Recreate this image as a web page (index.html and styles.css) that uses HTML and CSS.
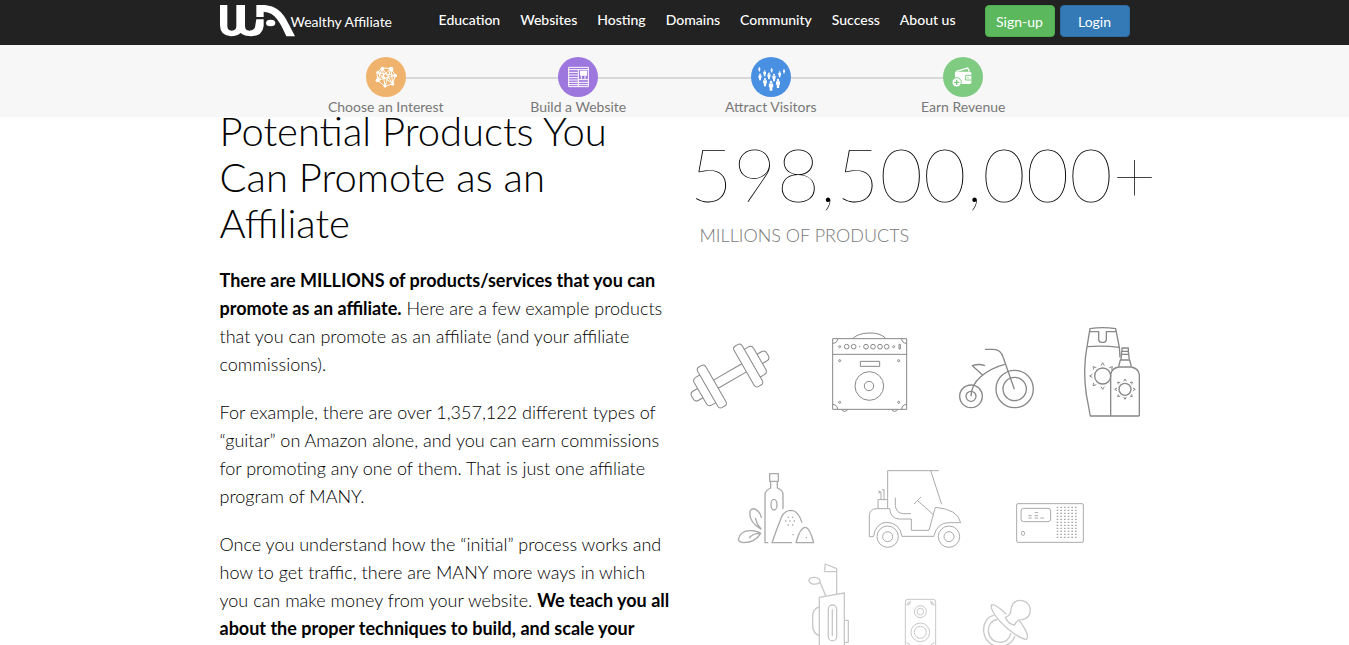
FILE: index.html
```html
<!doctype html>
<html lang="en">
<head>
	<meta charset="utf-8">
	<title>Wealthy Affiliate</title>
	<link rel="stylesheet" href="styles.css">
</head>
<body>
	<header class="site-header">
		<div class="topbar">
			<div class="container topbar-inner">
				<a class="brand" href="#">
					<svg class="logo" width="75" height="33" viewBox="30 15 225 99" aria-hidden="true">
						<path d="M30 15H52V78Q52 92 65 92Q79 92 79 78V15H105V78Q105 92 118 92Q131 92 135 82L139 58H161V78Q158 108 124 109Q104 109 92 99Q80 109 62 109Q30 106 30 76Z" fill="#fff"/>
						<path d="M139 15H157C202 15 222 42 238 76L255 109H229C210 66 195 37 161 35V51H139Z" fill="#fff"/>
						<ellipse cx="182" cy="69" rx="14" ry="10" fill="#fff"/>
					</svg>
					<span>Wealthy Affiliate</span>
				</a>
				<nav class="nav">
					<a href="#">Education</a>
					<a href="#">Websites</a>
					<a href="#">Hosting</a>
					<a href="#">Domains</a>
					<a href="#">Community</a>
					<a href="#">Success</a>
					<a href="#">About us</a>
				</nav>
				<div class="actions">
					<button type="button" class="btn btn-green">Sign-up</button>
					<button type="button" class="btn btn-blue">Login</button>
				</div>
			</div>
		</div>
		<div class="process">
			<ol class="steps">
				<li class="step">
					<svg class="step-icon orange" width="40" height="40" viewBox="0 0 120 120" aria-hidden="true">
						<g fill="none" stroke="#fff" stroke-width="3">
							<path d="M49 33L75 35L88 55L80 80L57 88L35 70L33 47ZM49 33L57 88M75 35L35 70M88 55L33 47M80 80L49 33M33 47L80 80M75 35L57 88M88 55L35 70M49 33L35 70M75 35L80 80"/>
						</g>
						<g fill="#fff">
							<circle cx="49" cy="34" r="5"/><circle cx="75" cy="36" r="7"/><circle cx="88" cy="56" r="5"/><circle cx="80" cy="81" r="5"/>
							<circle cx="57" cy="88" r="4"/><circle cx="35" cy="70" r="6"/><circle cx="36" cy="46" r="5"/><circle cx="53" cy="61" r="4"/>
						</g>
					</svg>
					<a href="#">Choose an Interest</a>
				</li>
				<li class="step">
					<svg class="step-icon purple" width="40" height="40" viewBox="0 0 120 120" aria-hidden="true">
						<path d="M32 31H91V89H32ZM32 38H91M61 38V89M32 46H61M32 54H61M32 62H61M32 69H61M32 76H61M32 83H61M61 68H91M61 76H91M61 83H91M70 56V67M81 56V67" fill="none" stroke="#fff" stroke-width="3"/>
						<path d="M66 41H87V56H66Z" fill="#fff"/>
					</svg>
					<a href="#">Build a Website</a>
				</li>
				<li class="step">
					<svg class="step-icon blue" width="40" height="40" viewBox="0 0 120 120" aria-hidden="true">
						<defs>
							<g id="person">
								<circle cx="0" cy="-9" r="3"/>
								<path d="M-5 -6H5V3H3V11H-3V3H-5Z"/>
							</g>
						</defs>
						<g fill="#fff">
							<use href="#person" transform="translate(25 37) scale(.6)"/>
							<use href="#person" transform="translate(41 49) scale(.8)"/>
							<use href="#person" transform="translate(62 40) scale(.6)"/>
							<use href="#person" transform="translate(99 43) scale(.6)"/>
							<use href="#person" transform="translate(86 52) scale(.8)"/>
							<use href="#person" transform="translate(27 60) scale(.9)"/>
							<use href="#person" transform="translate(54 57) scale(.9)"/>
							<use href="#person" transform="translate(69 62)"/>
							<use href="#person" transform="translate(42 76) scale(1.1)"/>
							<use href="#person" transform="translate(81 80) scale(1.2)"/>
							<use href="#person" transform="translate(60 87) scale(1.3)"/>
						</g>
					</svg>
					<a href="#">Attract Visitors</a>
				</li>
				<li class="step">
					<svg class="step-icon green" width="40" height="40" viewBox="0 0 120 120" aria-hidden="true">
						<path d="M40 43L74 33L79 43" fill="none" stroke="#fff" stroke-width="4"/>
						<path d="M36 44H80Q85 44 85 49V76Q85 81 80 81H40Q36 81 36 76Z" fill="#fff"/>
						<path d="M85 55H68V69H85M75 60V64" fill="none" stroke="#7fcb82" stroke-width="3"/>
						<circle cx="41" cy="76" r="14" fill="#fff" stroke="#7fcb82" stroke-width="3"/>
						<path d="M41 68V84M33 76H49" stroke="#7fcb82" stroke-width="4"/>
					</svg>
					<a href="#">Earn Revenue</a>
				</li>
			</ol>
		</div>
	</header>

	<main class="container content">
		<section class="text">
			<h2>Potential Products You Can Promote as an Affiliate</h2>
			<p><strong>There are MILLIONS of products/services that you can promote as an affiliate.</strong> Here are a few example products that you can promote as an affiliate (and your affiliate commissions).</p>
			<p>For example, there are over 1,357,122 different types of “guitar” on Amazon alone, and you can earn commissions for promoting any one of them. That is just one affiliate program of MANY.</p>
			<p>Once you understand how the “initial” process works and how to get traffic, there are MANY more ways in which you can make money from your website. <strong>We teach you all about the proper techniques to build, and scale your</strong></p>
		</section>

		<section class="products">
			<div class="count">598,500,000+</div>
			<div class="count-label">MILLIONS OF PRODUCTS</div>

			<div class="icon-row dark">
				<!-- dumbbell -->
				<svg width="110" height="100" viewBox="30 0 330 300">
					<g transform="translate(150 168) rotate(-30)">
						<path d="M-49 -14H49M-49 14H49"/>
						<rect x="-77" y="-70" width="28" height="140" rx="10"/>
						<rect x="49" y="-70" width="28" height="140" rx="10"/>
						<path d="M-77 -48H-90Q-103 -48 -103 -36V36Q-103 48 -90 48H-77M77 -48H90Q103 -48 103 -36V36Q103 48 90 48H77"/>
						<path d="M-103 -16H-118Q-130 -16 -130 -5V5Q-130 16 -118 16H-103M103 -16H118Q130 -16 130 -5V5Q130 16 118 16H103"/>
					</g>
				</svg>
				<!-- guitar amp -->
				<svg width="130" height="100" viewBox="360 0 390 300">
					<path d="M458 56H680V268H458ZM458 103H680M519 55Q534 40 567 39Q602 38 617 55M541 124H599V139H541Z"/>
					<path d="M458 70Q472 70 473 56M665 56Q666 70 680 70M458 253Q472 254 473 268M665 268Q666 254 680 253M485 268Q487 274 494 274Q501 274 503 268M635 268Q637 274 644 274Q651 274 653 268"/>
					<circle cx="568" cy="198" r="43"/><circle cx="567" cy="198" r="14"/>
					<circle cx="500" cy="80" r="7"/><circle cx="521" cy="80" r="7"/><circle cx="558" cy="80" r="7"/><circle cx="579" cy="80" r="7"/><circle cx="600" cy="80" r="7"/><circle cx="620" cy="80" r="7"/>
					<circle cx="479" cy="80" r="3"/><circle cx="539" cy="80" r="1"/><circle cx="641" cy="80" r="3"/><path d="M657 73H661V87H657Z"/>
					<circle cx="479" cy="122" r="3"/><circle cx="656" cy="122" r="3"/><circle cx="479" cy="247" r="3"/><circle cx="656" cy="247" r="3"/>
				</svg>
				<!-- tricycle -->
				<svg class="bold" width="130" height="100" viewBox="-30 0 390 300">
					<circle cx="93" cy="229" r="34"/><circle cx="93" cy="229" r="15"/>
					<circle cx="224" cy="207" r="56"/><circle cx="224" cy="207" r="35"/>
					<path d="M135 88H160Q183 88 190 113L223 208M194 133Q150 145 122 170Q94 194 93 229M127 164L97 137Q116 130 135 137"/>
				</svg>
				<!-- sun lotion -->
				<svg width="90" height="100" viewBox="360 0 270 300">
					<g class="bold">
						<path d="M441 80L450 26Q488 20 527 26L538 82M441 80Q490 76 538 82L540 112M441 80Q428 150 439 224L451 288H598M447 35H476V58Q476 67 485 67H491Q499 67 499 58V35H528"/>
						<path d="M512 288V164Q514 145 536 141H573Q596 145 598 164V288M536 139L541 120H569L574 139M543 119L545 94H565L568 119M546 94V84H565V94M545 103H566"/>
						<circle cx="488" cy="168" r="24"/><circle cx="555" cy="208" r="18"/>
					</g>
					<path d="M483 137L488 128L493 137M483 200L488 208L493 200M457 163L449 168L457 173M461 149L459 140L469 143M461 188L459 197L469 194M508 143L517 140L515 149"/>
					<path d="M551 184L555 177L559 184M551 231L555 238L559 231M531 204L524 208L531 212M579 204L586 208L579 212M535 193L533 186L541 188M570 188L577 186L575 193M535 223L533 230L541 228M570 228L577 230L575 223"/>
				</svg>
			</div>

			<div class="icon-row mid">
				<!-- olive oil -->
				<svg class="bold" width="120" height="95" viewBox="0 0 360 285">
					<path d="M119 41H145V64H119ZM122 64V84Q105 91 105 105V248H115M142 64V84Q160 91 159 106V147"/>
					<ellipse cx="132" cy="134" rx="9" ry="16"/>
					<path d="M186 248H126Q141 204 155 170Q164 151 184 151Q205 152 216 188M198 248H251Q239 202 226 202Q211 201 198 248Z"/>
					<path d="M94 208Q55 185 60 154Q65 143 77 148Q93 159 94 174M76 174L82 192L94 208M92 220Q76 247 41 248Q25 246 25 238Q30 214 58 212Q79 211 92 220ZM92 220Q70 219 57 234"/>
					<path stroke-dasharray="4 9" d="M173 172H197M165 183H203M173 195H195M187 224H198M227 233H235"/>
				</svg>
				<!-- golf cart -->
				<svg width="120" height="95" viewBox="360 0 360 285">
					<path d="M473 145V32H626M602 32L635 133M418 230V166Q420 146 440 146H479Q482 177 508 177H544V211H597L616 142Q684 148 692 188H657Q622 188 612 226V229H516Q509 188 469 187Q438 188 430 230ZM496 113V137Q499 160 520 161H543M552 132L573 111M563 122L610 164"/>
					<path d="M444 145V119H472M445 93L453 96V119M456 90L462 88V119M451 96L445 100"/>
					<circle cx="473" cy="230" r="32"/><circle cx="473" cy="230" r="15"/>
					<circle cx="657" cy="230" r="32"/><circle cx="657" cy="230" r="15"/>
				</svg>
				<!-- radio -->
				<svg width="140" height="95" viewBox="-90 -90 420 285">
					<rect x="50" y="41" width="200" height="116" rx="4"/>
					<rect x="63" y="55" width="89" height="40" rx="8"/>
					<ellipse cx="69" cy="130" rx="5" ry="6"/>
					<path d="M85 77H95M85 84H95M104 68H114M104 77H114M104 84H114M121 84H132"/>
					<path stroke-width="4" stroke-dasharray="5 6" d="M170 52H232M170 61H232M170 70H232M170 79H232M170 88H232M170 97H232M170 106H232M170 115H232M170 124H232M170 133H232M170 142H232"/>
				</svg>
			</div>

			<div class="icon-row light">
				<!-- golf bag -->
				<svg class="bold" width="90" height="100" viewBox="0 0 270 300">
					<path d="M88 300V127L163 114V300M163 196H175V262H163M88 155Q68 162 68 184V214Q70 236 88 242M103 50L106 27L140 41V117M103 50H140M91 83L107 122"/>
					<path d="M91 82Q84 89 68 87Q55 83 57 74Q61 66 75 67Q91 69 91 82Z"/>
					<rect x="115" y="150" width="25" height="107" rx="12"/><path d="M127 163V243"/>
				</svg>
				<!-- speaker -->
				<svg width="70" height="100" viewBox="270 0 210 300">
					<rect x="346" y="133" width="91" height="160" rx="8"/>
					<circle cx="391" cy="170" r="18"/><circle cx="391" cy="170" r="10"/>
					<circle cx="391" cy="232" r="28"/><circle cx="391" cy="232" r="18"/>
					<path d="M349 150Q361 151 361 137M434 150Q422 151 422 137M349 263Q361 264 361 277M434 263Q422 264 422 277"/>
					<circle cx="356" cy="145" r="3"/><circle cx="427" cy="145" r="3"/>
				</svg>
				<!-- pacifier -->
				<svg class="bold" width="100" height="100" viewBox="480 0 300 300">
					<path d="M613 181C592 184 579 204 581 230C585 260 607 276 635 274C656 271 669 259 675 243M622 194C606 195 594 209 595 230C598 250 612 263 633 262C648 260 659 250 662 235"/>
					<path d="M649 178Q619 149 606 149Q599 154 611 174Q626 199 657 224Q690 251 709 253Q718 247 704 221Q697 208 688 197"/>
					<path d="M646 187Q662 181 663 165Q664 142 686 136Q715 135 721 162Q722 188 697 194Q679 194 674 210Q656 210 646 187Z"/>
				</svg>
			</div>
		</section>
	</main>
</body>
</html>
```

FILE: styles.css
```css
*{
	box-sizing:border-box;
}
body{
	margin:0;
	height:100vh;
	overflow:hidden;
	background:#fff;
	color:#000;
	font-family:Lato, "Open Sans", sans-serif;
	font-size:14px;
}
a{
	color:inherit;
	text-decoration:none;
}
.container{
	width:100%;
	max-width:940px;
	margin:0 auto;
	padding:0 15px;
}

/* header */
.site-header{
	position:fixed;
	top:0;
	left:0;
	right:0;
	z-index:10;
}
.topbar{
	background:#222;
	color:#fff;
}
.topbar-inner{
	display:flex;
	align-items:flex-start;
	height:45px;
	padding-top:5px;
}
.brand{
	display:flex;
	align-items:center;
	margin-right:auto;
}
.brand span{
	margin-left:-4px;
}
.nav{
	display:flex;
	gap:20px;
	margin-right:29px;
	line-height:30px;
	font-weight:500;
}
.actions{
	display:flex;
	gap:5px;
}
.btn{
	width:70px;
	height:32px;
	padding:0;
	border:1px solid;
	border-radius:4px;
	color:#fff;
	font:inherit;
}
.btn-green{
	background:#5cb85c;
	border-color:#4cae4c;
}
.btn-blue{
	background:#337ab7;
	border-color:#2e6da4;
}

/* steps */
.process{
	background:#f7f7f7;
	color:#777;
}
.steps{
	position:relative;
	z-index:0;
	display:flex;
	max-width:770px;
	height:72px;
	margin:0 auto;
	padding:12px 0 0;
	list-style:none;
}
.step{
	position:relative;
	flex:1;
	text-align:center;
	line-height:20px;
}
.step + .step:before{
	content:"";
	position:absolute;
	top:20px;
	right:50%;
	z-index:-1;
	width:100%;
	height:2px;
	background:#d8d8d8;
}
.step-icon{
	display:block;
	margin:0 auto;
	border-radius:50%;
}
.orange{
	background:#f0b36e;
}
.purple{
	background:#9d76de;
}
.blue{
	background:#4a90e2;
}
.green{
	background:#7fcb82;
}

/* content */
.content{
	display:grid;
	grid-template-columns:1fr 1fr;
	column-gap:30px;
	padding-top:108px;
}
.text{
	margin-right:-14px;
	font-size:18px;
	font-weight:300;
	line-height:28px;
}
.text h2{
	margin:0 0 20px;
	font-size:40px;
	font-weight:300;
	line-height:46px;
}
.text p{
	margin:0 0 20px;
}
.text strong{
	font-weight:700;
}
.products{
	min-width:0;
}
.count{
	padding-top:25px;
	font-size:75px;
	font-weight:100;
	line-height:80px;
	white-space:nowrap;
}
.count-label{
	padding:8px 0 0 10px;
	color:#777;
	font-size:18px;
	font-weight:300;
	line-height:28px;
}
.icon-row{
	display:flex;
	justify-content:center;
	margin-right:-20px;
}
.icon-row svg{
	flex:none;
	fill:none;
	stroke-width:3;
	stroke-linejoin:round;
}
.icon-row .bold{
	stroke-width:4;
}
.dark{
	margin-top:71px;
	stroke:#888;
}
.mid{
	margin-top:40px;
	stroke:#aaa;
}
.light{
	stroke:#c8c8c8;
}
```
